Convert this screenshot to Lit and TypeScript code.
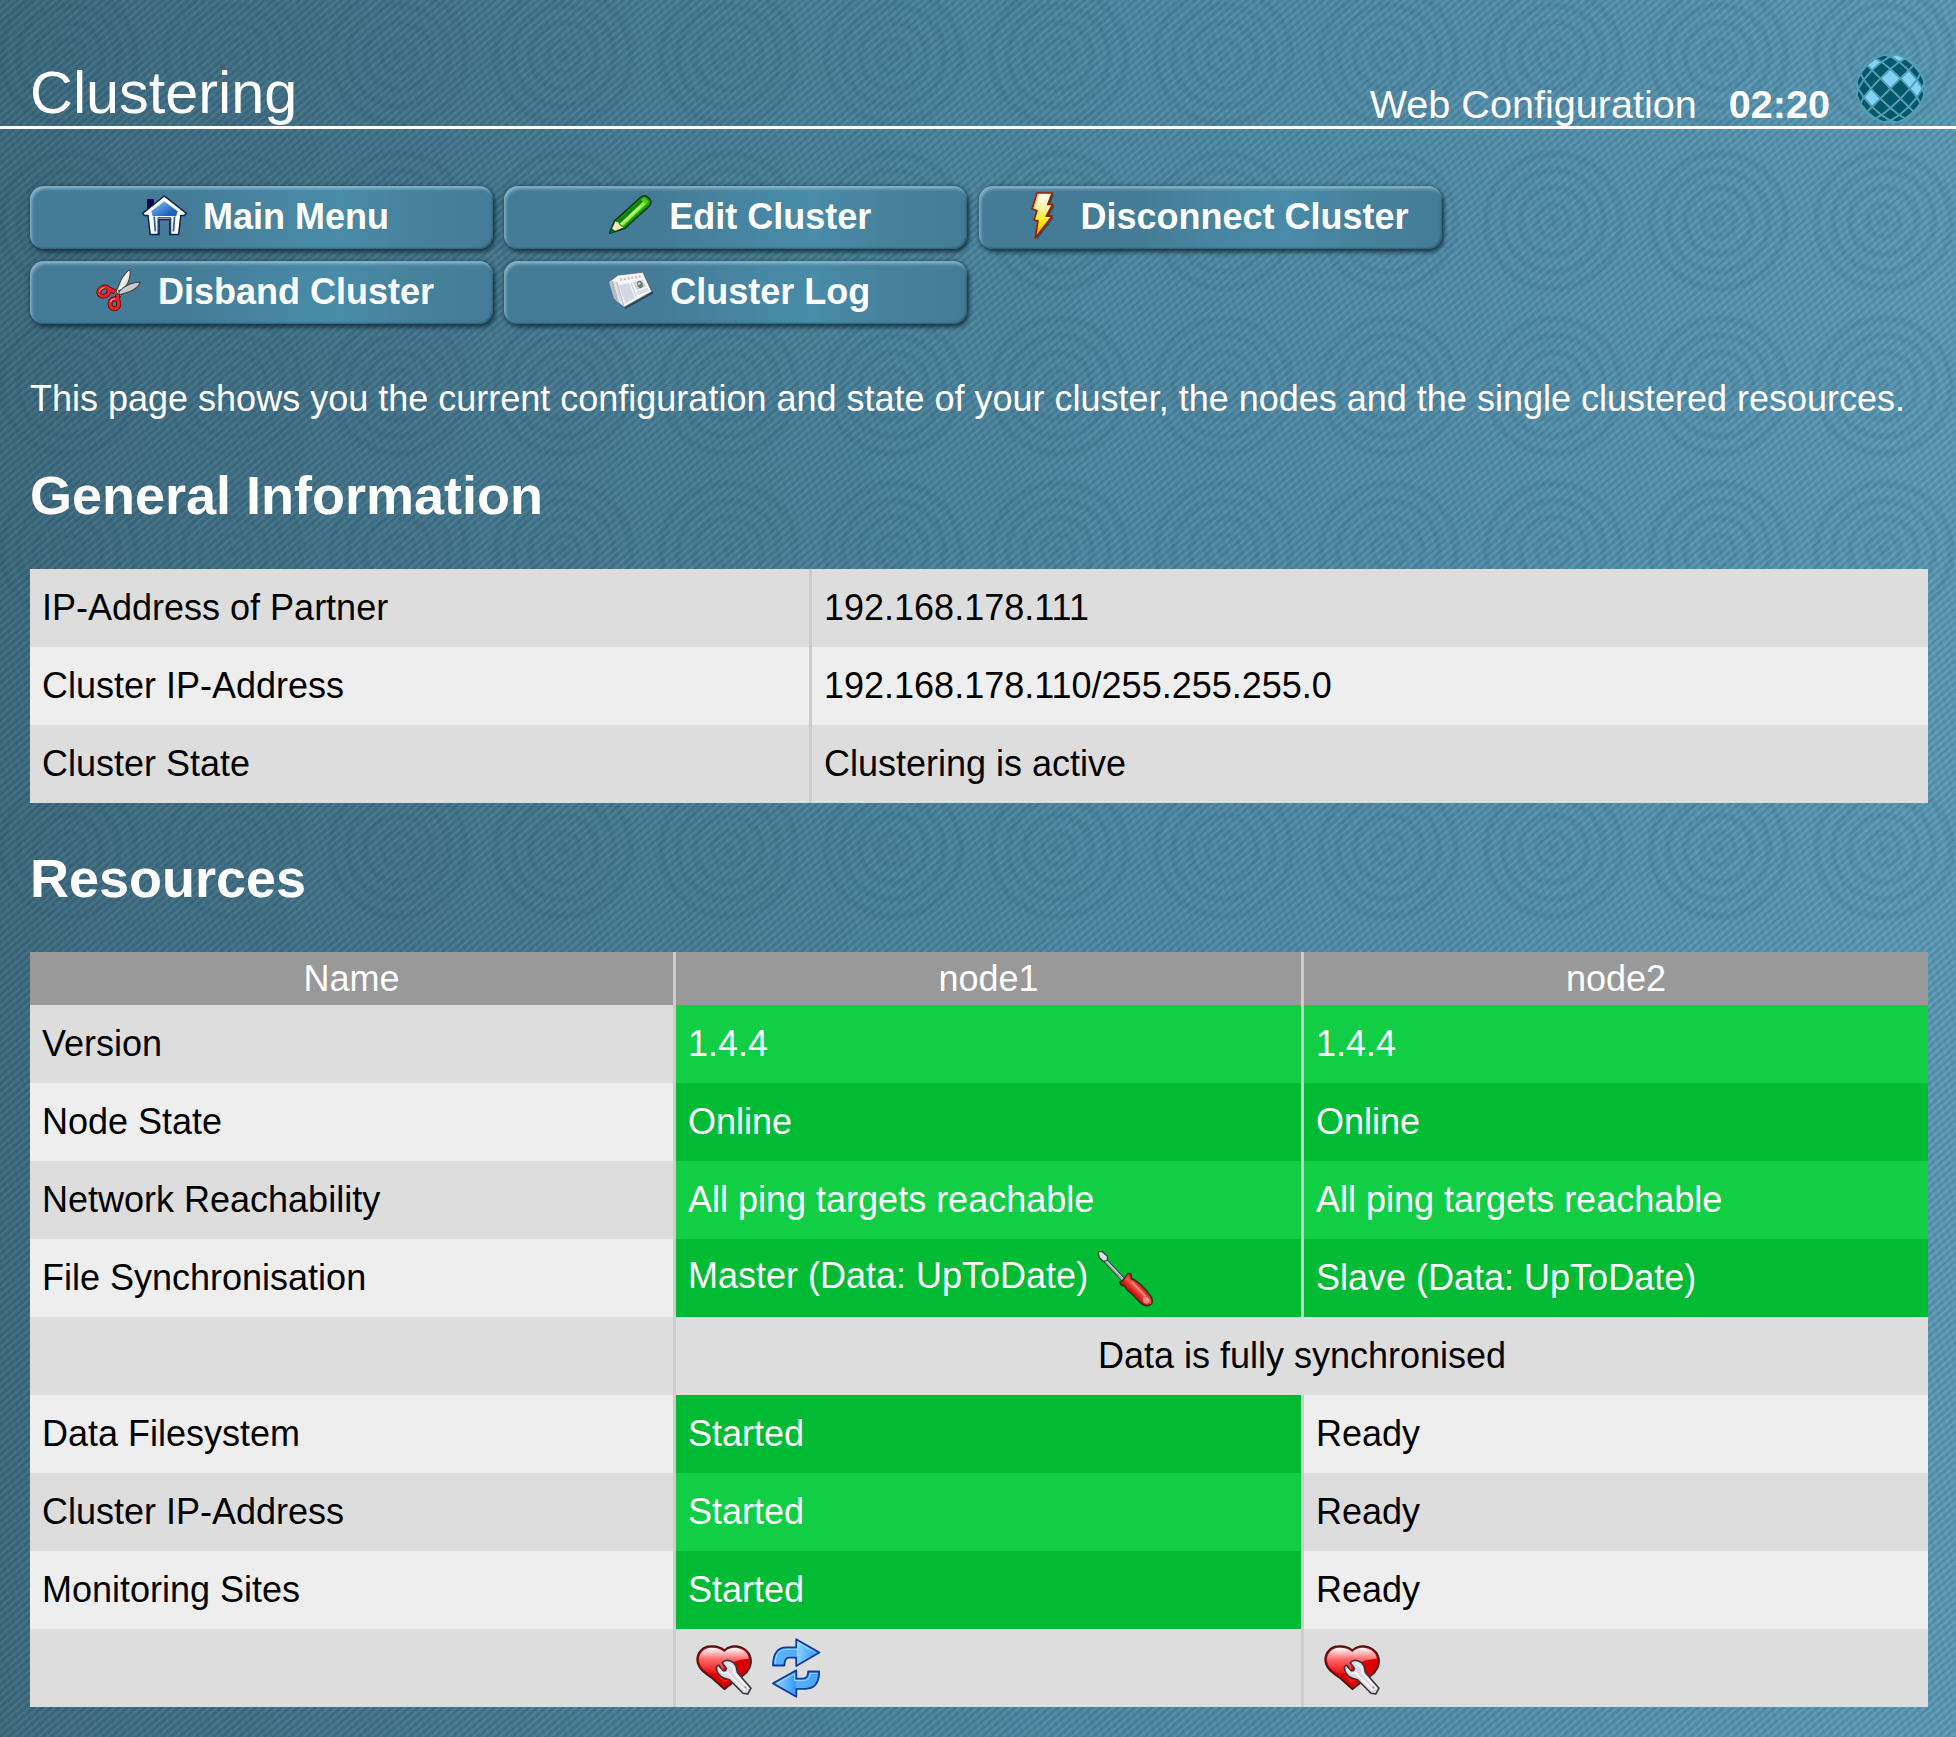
import { LitElement, html, svg, css, nothing } from "lit";
import { customElement } from "lit/decorators.js";
import { classMap } from "lit/directives/class-map.js";

const GLOBE_R = 34.5;
const GLOBE_STEP = (17.2 * Math.PI) / 180;
const LIT_TILES = new Set(["0,-1", "2,-1", "-2,1", "3,0", "-2,-3", "1,-4", "0,5"]);

function project(i: number, j: number): string {
  const d = Math.hypot(i, j);
  if (d === 0) return `${GLOBE_R},${GLOBE_R}`;
  const r = GLOBE_R * Math.sin(Math.min(d * GLOBE_STEP, Math.PI / 2));
  return `${(GLOBE_R + (r * i) / d).toFixed(2)},${(GLOBE_R + (r * j) / d).toFixed(2)}`;
}

function globeTiles() {
  const tiles = [];
  for (let i = -5; i <= 5; i++) {
    for (let j = -5; j <= 5; j++) {
      if ((i + j) % 2 === 0 || Math.hypot(i, j) > 5.3) continue;
      const pts = [project(i - 1, j), project(i, j - 1), project(i + 1, j), project(i, j + 1)].join(" ");
      tiles.push(svg`<polygon points=${pts} fill=${LIT_TILES.has(`${i},${j}`) ? "#82d3f4" : "#00586a"}></polygon>`);
    }
  }
  return tiles;
}

const globe = html`<svg class="globe" viewBox="0 0 69 69">
  <g stroke="#559cb6" stroke-width="1.8" stroke-linejoin="round">${globeTiles()}</g>
</svg>`;

const house = html`<svg class="btn-icon" viewBox="0 0 56 57">
  <defs><linearGradient id="h" x1="0" y1="0" x2="1" y2="1"><stop offset=".1" stop-color="#7db9ef"/><stop offset=".75" stop-color="#1f63bd"/></linearGradient></defs>
  <path d="M11.5 10.5h6v7l-6 4.5z" fill="#00005c" stroke="#00004a"/>
  <path d="M28.3 7 50.5 24.3 48.5 26.5H44.8L42.6 45.6H33.8V30.5H23V45.6H14.2L12 26.5H8.5L6.5 24.3Z" fill="#fff" stroke="#0b2350" stroke-width="1.5" stroke-linejoin="round"/>
  <path d="M28.3 12.2 41.6 22.3 40.2 27H16.6L15.2 22.3Z" fill="url(#h)"/>
  <path d="M18.2 27.5 19.4 42.5M38.6 27.5 37.4 42.5" stroke="#2c64b4" stroke-width="1.8"/>
  <path d="M22 45V28.8H34.8V45" fill="none" stroke="#1b1d6a" stroke-width="1"/>
</svg>`;

const pencil = html`<svg class="btn-icon" viewBox="0 0 56 57">
  <path d="M7.6 44.2 12.6 32 38.6 8.3Q41.8 5.6 45 7.6L48 10.5Q50 13.6 47.5 16.8L23 39.2Z" fill="#17a20b" stroke="#06391d" stroke-width="1.7" stroke-linejoin="round"/>
  <path d="M15.3 32.5 40.5 9.2 43.3 9.7 18 34.5Z" fill="#078408"/>
  <path d="M17.6 34.8 41.5 12.2 44.8 14.6 21 37Z" fill="#8eed3a"/>
  <path d="M19 35.2 38.5 17" stroke="#d8ffac" stroke-width="1.5"/>
  <path d="M39 11 42 8.5 46.8 12.2 44.4 15.4Z" fill="#55c80a"/>
  <path d="M9.8 40.2 13.4 32.6 16.2 33.4 17.8 36.5 21.2 38.6 12.6 42Z" fill="#ffe9bd"/>
  <path d="M7.6 44.2 9.8 39.2 13.2 41.7Z" fill="#087016"/>
</svg>`;

const bolt = html`<svg class="btn-icon" viewBox="0 0 56 57">
  <defs><linearGradient id="b" x1="0" y1="0" x2="0" y2="1"><stop offset=".15" stop-color="#fffbe0"/><stop offset=".4" stop-color="#fff28a"/><stop offset=".65" stop-color="#ffee00"/><stop offset="1" stop-color="#f88a00"/></linearGradient></defs>
  <path d="M24.5 5.5H40L35.5 17.2H40.5L34.2 28.8H40L22.8 51 25.4 33.6 21.5 32.8 24.5 23.5 19.8 21.5Z" fill="#1c3c4c" opacity=".65"/>
  <path d="M23 4H38.2L33.7 15.5H38.7L32.2 27.2H38L21.2 49.2 24 31.8 20 31 23 21.7 18.2 19.7Z" fill="url(#b)" stroke="#a41a00" stroke-width="1.7" stroke-linejoin="round"/>
  <path d="M24.4 5.5 20 18.7" stroke="#ffa024" stroke-width="1"/>
</svg>`;

const scissors = html`<svg class="btn-icon" viewBox="0 0 56 57">
  <path d="M25 27.5 27.5 22Q31 11 38.8 5.6 40.4 10.5 36.8 19L29 33.5Z" fill="#e4e5e6" stroke="#3b4042" stroke-width="1.1" stroke-linejoin="round"/>
  <path d="M28 27.5Q37 18.2 49.3 18 47 24.5 39 27.4L28 31Z" fill="#c9cccd" stroke="#3b4042" stroke-width="1.1" stroke-linejoin="round"/>
  <path d="M37.8 7.5 29.5 25" stroke="#fff" stroke-width="1.4"/>
  <g fill="none" stroke="#5e0707" stroke-width="4.9"><ellipse cx="13" cy="27.6" rx="5.3" ry="4.3" transform="rotate(-28 13 27.6)"/><ellipse cx="23.4" cy="39.8" rx="4.4" ry="5" /><path d="M18 25 24 28M26.5 30.5 26.8 35"/></g>
  <g fill="none" stroke="#f22020" stroke-width="3.3"><ellipse cx="13" cy="27.6" rx="5.3" ry="4.3" transform="rotate(-28 13 27.6)"/><ellipse cx="23.4" cy="39.8" rx="4.4" ry="5"/><path d="M18 25 24 28M26.5 30.5 26.8 35"/></g>
  <path d="M8.5 28Q9 24.5 13.5 23.5M19.6 38Q20.5 35 24 34.8" fill="none" stroke="#ff9c96" stroke-width="1.1"/>
  <circle cx="28" cy="26.8" r="1" fill="#555"/>
</svg>`;

const news = html`<svg class="btn-icon" viewBox="0 0 56 57">
  <path d="M7.5 19.5 16 12.5 41 10 50.5 29.5 22.5 45 12.5 36Z" fill="#17384a" opacity=".7"/>
  <path d="M6 18 15 11.2 39.8 8.3 48.8 27.6 21 43.2 11.2 34.5Z" fill="#f6f6f9" stroke="#5b6773" stroke-width=".7"/>
  <path d="M6 18 9.5 17 15.6 39.2 11.2 34.5Z" fill="#b8bac6"/>
  <path d="M10.5 16.8 13.5 17.5 21.5 42.6 16.6 39Z" fill="#dedfe8"/>
  <path d="M9.7 17 16 39.5M13.6 18 21.2 42.6" stroke="#9ea1ae" stroke-width=".7"/>
  <path d="M15.5 21.3 26.3 19 31.7 34 22.5 39.5Z" fill="#d5d7e4"/>
  <path d="M28 19.2 33.5 33M33.8 28.7 44.8 24.3M34.6 30.5 45.6 26" stroke="#d0d2da" stroke-width="1.3"/>
  <path d="M17 15.8 37.5 12.4" stroke="#c6c7cd" stroke-width="2.4" stroke-dasharray="2.2 1.6"/>
  <path d="M30 18.2 39.5 15.5 43 22.2 34.2 26.2Z" fill="#cdd1d2"/>
  <ellipse cx="37" cy="20.4" rx="2.7" ry="3.8" fill="#6d7779" transform="rotate(-25 37 20.4)"/>
  <circle cx="36" cy="19.6" r="1.4" fill="#cfd2d2"/>
</svg>`;

const screwdriver = html`<svg class="cell-icon driver" viewBox="0 0 60 60">
  <defs><linearGradient id="d" x1="36" y1="49" x2="48" y2="37" gradientUnits="userSpaceOnUse"><stop offset="0" stop-color="#8c0604"/><stop offset=".35" stop-color="#dd1f18"/><stop offset=".6" stop-color="#f25b4c"/><stop offset="1" stop-color="#b00f0c"/></linearGradient></defs>
  <path d="M8 10 28.5 32" stroke="#254c30" stroke-width="4.6"/>
  <path d="M8 10 28.5 32" stroke="#a9aab9" stroke-width="2.6"/>
  <path d="M9 10.4 28 30" stroke="#e6e4f0" stroke-width=".9"/>
  <path d="M3.3 4 7.2 3.5 12.6 8.6 12.2 12.5 8.6 13.4 4.2 9.5Z" fill="#dcdce4" stroke="#26432f" stroke-width="1.2" stroke-linejoin="round"/>
  <path d="M24.8 34Q29 32.5 31.6 27 33.5 24 36.2 26.5V30.5Q42 32.3 50 41L55.5 48Q58.8 53 56.2 56.2 52 59.8 46.2 55.4L37 46Q30.5 41 29.8 37.8 25.6 38.2 24.8 34Z" fill="url(#d)" stroke="#37290f" stroke-width="1.4" stroke-linejoin="round"/>
  <path d="M37.5 34.5 50 47.5" stroke="#ff9f90" stroke-width="2" stroke-linecap="round" opacity=".6"/>
  <ellipse cx="51" cy="52.3" rx="3.6" ry="3" transform="rotate(45 51 52.3)" fill="#ffc0b3" opacity=".6"/>
</svg>`;

const heart = html`<svg class="cell-icon" viewBox="0 0 60 60">
  <defs><linearGradient id="r" x1="0" y1="0" x2="0" y2="1"><stop offset=".05" stop-color="#fff0f0"/><stop offset=".45" stop-color="#ff6867"/><stop offset="1" stop-color="#e90f10"/></linearGradient></defs>
  <path d="M30.3 12.5C34.5 8.2 41 7.2 46.5 9 54 11.5 57.5 18 57 25 56 34 48 39 42 42L30.3 51.2 18 40C11 35 3.8 31 3.2 22 3 14.5 9 8.5 16.3 8.2 22 7.8 27 9.2 30.3 12.5Z" fill="#d90000" stroke="#471717" stroke-width="1.8" stroke-linejoin="round"/>
  <path d="M30.3 14C35 9.5 41 8.8 46 10.7 51 12.4 54.5 16 54.8 20.8 43 22 37 24 30.8 30 23 36.5 17.5 36.5 14.5 35 8.5 31 5.3 27 5 21.5 5 15 10.5 10.1 16.8 9.8 22 9.5 27 11 30.3 14Z" fill="url(#r)"/>
  <path d="M20.5 31.5 30 43.5 39 38.8" fill="none" stroke="#f83232" stroke-width="2" opacity=".6"/>
  <path d="M28.2 24.8Q29.6 22.6 32.8 22.2 41.2 22.8 42.6 30.5 42.8 33.8 44.2 35.5L57 50.2 53.8 56 49 55.3 35.6 41.7 30 40Q22.5 36.7 22.4 29.5 23 27.1 25 27.2L27.8 32.8 31.4 32.6 32.5 30.5Z" fill="#dadbe6" stroke="#3d3338" stroke-width="1.6" stroke-linejoin="round"/>
  <path d="M25 30.5 29 35.3 34 35 37.5 39 51.5 52.8M34 25.2 39.5 29.6 40.5 35.2 54 50" fill="none" stroke="#fff" stroke-width="1.6"/>
  <circle cx="51.5" cy="49.3" r="1.1" fill="#96979f"/>
</svg>`;

const arrows = html`<svg class="cell-icon" viewBox="0 0 60 60">
  <defs><linearGradient id="a" x1="0" y1="0" x2="1" y2="0"><stop offset="0" stop-color="#5cb4ff"/><stop offset=".5" stop-color="#52acfd"/><stop offset=".52" stop-color="#8bd2ff"/><stop offset="1" stop-color="#2b8ff3"/></linearGradient>
  <linearGradient id="e" x1="0" y1="0" x2="1" y2="0"><stop offset="0" stop-color="#9ddcff"/><stop offset=".48" stop-color="#389bfa"/><stop offset=".52" stop-color="#58b2ff"/><stop offset="1" stop-color="#46a3fb"/></linearGradient></defs>
  <g stroke="#0c3f9e" stroke-width="1.8" stroke-linejoin="round">
    <path d="M7 27.5C7 15.5 11 9.6 20.5 9.4H30.2V1.2L53.4 14.5 30.2 28V19.6H23Q18.5 19.6 18.4 27.5Z" fill="url(#a)"/>
    <path d="M53.2 33.5C53.2 45 49 50.6 39.5 50.8H30.3V58.8L7 45.4 30.3 32.2V40.6H37Q42 40.6 42.2 33.5Z" fill="url(#e)"/>
  </g>
  <path d="M9.2 25.5C9.8 15.5 13 11.5 20.8 11.4H32V4.8L49.5 14.5M11 45.4 28.5 35.8V42.6H37.5Q43.8 42.5 44.2 35.4H51.2" fill="none" stroke="#b2e2ff" stroke-width="1" opacity=".8"/>
</svg>`;

const actions = [
  { icon: house, label: "Main Menu" },
  { icon: pencil, label: "Edit Cluster" },
  { icon: bolt, label: "Disconnect Cluster" },
  { icon: scissors, label: "Disband Cluster" },
  { icon: news, label: "Cluster Log" },
];

const general = [
  ["IP-Address of Partner", "192.168.178.111"],
  ["Cluster IP-Address", "192.168.178.110/255.255.255.0"],
  ["Cluster State", "Clustering is active"],
];

interface Cell {
  text?: string;
  ok?: boolean;
  span?: boolean;
  icons?: unknown[];
}

const resources: { name: string; cells: Cell[] }[] = [
  { name: "Version", cells: [{ text: "1.4.4", ok: true }, { text: "1.4.4", ok: true }] },
  { name: "Node State", cells: [{ text: "Online", ok: true }, { text: "Online", ok: true }] },
  {
    name: "Network Reachability",
    cells: [{ text: "All ping targets reachable", ok: true }, { text: "All ping targets reachable", ok: true }],
  },
  {
    name: "File Synchronisation",
    cells: [
      { text: "Master (Data: UpToDate)", ok: true, icons: [screwdriver] },
      { text: "Slave (Data: UpToDate)", ok: true },
    ],
  },
  { name: "", cells: [{ text: "Data is fully synchronised", span: true }] },
  { name: "Data Filesystem", cells: [{ text: "Started", ok: true }, { text: "Ready" }] },
  { name: "Cluster IP-Address", cells: [{ text: "Started", ok: true }, { text: "Ready" }] },
  { name: "Monitoring Sites", cells: [{ text: "Started", ok: true }, { text: "Ready" }] },
  { name: "", cells: [{ icons: [heart, arrows] }, { icons: [heart] }] },
];

@customElement("app-root")
export class AppRoot extends LitElement {
  static styles = css`
    :host {
      --rings: radial-gradient(
        circle closest-side,
        rgba(25, 65, 88, 0.08) 0 5px,
        transparent 8px 12px,
        rgba(25, 65, 88, 0.085) 15px 17px,
        transparent 21px 29px,
        rgba(25, 65, 88, 0.085) 32px 35px,
        transparent 38px 46px,
        rgba(25, 65, 88, 0.085) 49px 52px,
        transparent 55px 62px,
        rgba(25, 65, 88, 0.085) 66px 69px,
        transparent 72px
      );
      display: block;
      box-sizing: border-box;
      min-height: 1737px;
      color: #fff;
      font: 36px/42px "Liberation Sans", Arial, sans-serif;
      background-color: #4a7e98;
      background-image: repeating-linear-gradient(
          139deg,
          rgba(20, 60, 82, 0.16) 0 1px,
          rgba(120, 185, 205, 0.1) 2.8px 3.4px,
          rgba(20, 60, 82, 0.16) 5.6px
        ),
        repeating-linear-gradient(72deg, rgba(20, 60, 82, 0.07) 0, transparent 3px 4px, rgba(20, 60, 82, 0.07) 7px),
        var(--rings), var(--rings), var(--rings), var(--rings), var(--rings),
        linear-gradient(
          92deg,
          #3f687c 0%,
          #447085 12%,
          #497a91 28%,
          #4d849c 45%,
          #548ca7 62%,
          #5a95b1 80%,
          #619eba 100%
        );
      background-size: auto, auto, 165px 160px, 165px 160px, 165px 160px, 165px 160px, 165px 160px, auto;
      background-position: 0 0, 0 0, -14px -24px, -14px 141px, -14px 306px, -14px 471px, -14px 769px, 0 0;
      background-repeat: repeat, repeat, repeat-x, repeat-x, repeat-x, repeat-x, repeat-x, no-repeat;
    }
    .header {
      display: flex;
      align-items: flex-end;
      box-sizing: border-box;
      height: 129px;
      padding: 0 31px 0 30px;
      border-bottom: 3px solid #fff;
    }
    .title {
      flex: 1;
      margin: 0;
      font-size: 59.4px;
      font-weight: 400;
      line-height: 66px;
    }
    .product, .clock {
      font-size: 39.6px;
      line-height: 43px;
    }
    .clock {
      margin-left: 32px;
      font-weight: 700;
    }
    .globe {
      display: block;
      width: 69px;
      height: 69px;
      margin: 0 0 3px 26px;
    }
    .main {
      padding: 57px 28px 30px 30px;
    }
    .actions {
      display: flex;
      flex-wrap: wrap;
      gap: 12px 11.3px;
      width: 1430px;
    }
    .action {
      display: flex;
      align-items: center;
      justify-content: center;
      box-sizing: border-box;
      width: 463px;
      height: 63px;
      padding-left: 2px;
      border-radius: 14px;
      font-weight: 700;
      background: linear-gradient(90deg, #447c97 0 34%, #4787a3 55%, #498ba8 67%, #46829c 82%, #447c97 100%);
      box-shadow: inset 2px 3px 3px rgba(170, 205, 220, 0.62), inset -1px -1px 2px rgba(20, 55, 70, 0.45),
        2px 3px 4px rgba(15, 40, 52, 0.75), 0 0 5px rgba(20, 50, 65, 0.55);
    }
    .label {
      padding-bottom: 2px;
    }
    .btn-icon {
      flex: none;
      width: 56px;
      height: 57px;
      margin-right: 11px;
    }
    .intro {
      margin: 54px 0 44px;
      white-space: nowrap;
    }
    .heading {
      margin: 44px 0 43px;
      font-size: 54px;
      line-height: 62px;
    }
    .table {
      display: grid;
      grid-auto-rows: 78px;
      color: #000;
    }
    .general {
      grid-template-columns: 782px 1fr;
    }
    .resources {
      grid-template-columns: 646px 628px 1fr;
      grid-template-rows: 53px;
    }
    .cell {
      display: flex;
      align-items: center;
      box-sizing: border-box;
      padding: 0 12px;
      border-right: 3px solid #ccc;
      background: #ddd;
      white-space: nowrap;
    }
    .cell.even {
      background: #eee;
    }
    .cell.last {
      border-right: 0;
    }
    .cell.ok {
      background: #11ce44;
      color: #fff;
    }
    .cell.ok.even {
      background: #00bb33;
    }
    .cell.span {
      grid-column: span 2;
      justify-content: center;
    }
    .cell.head {
      justify-content: center;
      background: #999;
      color: #fff;
    }
    .raised {
      padding-bottom: 5px;
    }
    .cell-icon {
      flex: none;
      width: 60px;
      height: 60px;
      margin: 0 6px;
    }
    .driver {
      margin-left: 7px;
    }
  `;

  private renderCell(cell: Cell, even: boolean, last: boolean) {
    const classes = { cell: true, even, last, ok: !!cell.ok, span: !!cell.span };
    return html`<div class=${classMap(classes)}>
      ${cell.text ? html`<span class=${classMap({ raised: !!cell.icons })}>${cell.text}</span>` : nothing}${cell.icons ?? nothing}
    </div>`;
  }

  render() {
    return html`
      <header class="header">
        <h1 class="title">Clustering</h1>
        <span class="product">Web Configuration</span>
        <span class="clock">02:20</span>
        ${globe}
      </header>
      <main class="main">
        <nav class="actions">
          ${actions.map((a) => html`<a class="action">${a.icon}<span class="label">${a.label}</span></a>`)}
        </nav>
        <p class="intro">
          This page shows you the current configuration and state of your cluster, the nodes and the single clustered resources.
        </p>
        <h2 class="heading">General Information</h2>
        <div class="table general">
          ${general.map(([name, value], i) =>
            [name, value].map((text, c) => this.renderCell({ text }, i % 2 === 1, c === 1))
          )}
        </div>
        <h2 class="heading">Resources</h2>
        <div class="table resources">
          ${["Name", "node1", "node2"].map(
            (text, c) => html`<div class=${classMap({ cell: true, head: true, last: c === 2 })}>${text}</div>`
          )}
          ${resources.map((row, i) => [
            this.renderCell({ text: row.name }, i % 2 === 1, false),
            ...row.cells.map((cell, c) => this.renderCell(cell, i % 2 === 1, c === row.cells.length - 1)),
          ])}
        </div>
      </main>
    `;
  }
}
